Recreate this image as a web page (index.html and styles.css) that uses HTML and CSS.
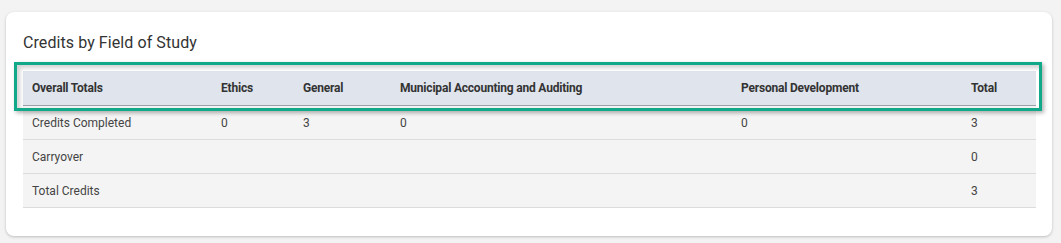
FILE: index.html
```html
<!DOCTYPE html>
<html lang="en">
<head>
<meta charset="utf-8">
<title>Credits by Field of Study</title>
<link rel="stylesheet" href="styles.css">
</head>
<body>
<section class="card">
  <h2 class="card-title">Credits by Field of Study</h2>
  <table class="credits">
    <colgroup>
      <col class="c-name">
      <col class="c-ethics">
      <col class="c-general">
      <col class="c-muni">
      <col class="c-personal">
      <col class="c-total">
    </colgroup>
    <thead>
      <tr>
        <th>Overall Totals</th>
        <th>Ethics</th>
        <th>General</th>
        <th>Municipal Accounting and Auditing</th>
        <th>Personal Development</th>
        <th>Total</th>
      </tr>
    </thead>
    <tbody>
      <tr>
        <td>Credits Completed</td>
        <td>0</td>
        <td>3</td>
        <td>0</td>
        <td>0</td>
        <td>3</td>
      </tr>
      <tr>
        <td>Carryover</td>
        <td></td>
        <td></td>
        <td></td>
        <td></td>
        <td>0</td>
      </tr>
      <tr>
        <td>Total Credits</td>
        <td></td>
        <td></td>
        <td></td>
        <td></td>
        <td>3</td>
      </tr>
    </tbody>
  </table>
  <div class="highlight" aria-hidden="true"></div>
</section>
</body>
</html>
```

FILE: styles.css
```css
html, body {
  margin: 0;
  padding: 0;
  background: #f3f3f3;
}

body {
  padding: 12px 9px 6px 6px;
  font-family: Roboto, "Liberation Sans", Arial, sans-serif;
  color: #333;
}

.card {
  position: relative;
  background: #fff;
  border-radius: 8px;
  box-shadow: 0 1px 3px rgba(0, 0, 0, 0.22);
  padding: 21px 16px 28px 17px;
}

.card-title {
  margin: 0 0 18px 0;
  font-size: 16px;
  line-height: 20px;
  font-weight: 400;
  letter-spacing: 0.08px;
  color: #333;
}

.credits {
  width: 100%;
  border-collapse: collapse;
  table-layout: fixed;
  background: #f4f4f4;
  font-size: 12px;
}

.c-name { width: 189px; }
.c-ethics { width: 82px; }
.c-general { width: 97px; }
.c-muni { width: 341px; }
.c-personal { width: 230px; }
.c-total { width: auto; }

.credits th {
  background: #dfe4ed;
  text-align: left;
  font-weight: 700;
  letter-spacing: -0.2px;
  color: #333;
  height: 34px;
  padding: 0 9px;
  border-bottom: 1px solid #9aa0a8;
}

.credits td {
  height: 33px;
  padding: 0 9px;
  color: #444;
  border-bottom: 1px solid #dcdcdc;
}

.highlight {
  position: absolute;
  left: 8px;
  top: 50px;
  width: 1028px;
  height: 49px;
  box-sizing: border-box;
  border: 3px solid #12a98a;
  box-shadow: 2px 2px 4px rgba(0, 0, 0, 0.3), inset 3px 3px 4px rgba(0, 0, 0, 0.18);
  pointer-events: none;
}
```
